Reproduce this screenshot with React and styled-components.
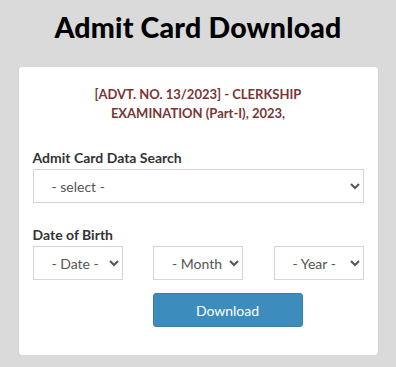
import React from "react";
import styled, { createGlobalStyle } from "styled-components";

const Global = createGlobalStyle`
    body {
        margin: 0;
        background: #dadada;
        font-family: Lato, "Liberation Sans", sans-serif;
    }
`;

const Page = styled.div`
    display: flex;
    flex-direction: column;
    align-items: center;
    padding-top: 5px;
`;

const Heading = styled.h1`
    margin: 0 0 17px;
    font-size: 28.5px;
    font-weight: 900;
    color: #000;
    line-height: 45px;
    letter-spacing: 0.2px;
`;

const Card = styled.div`
    width: 359px;
    box-sizing: border-box;
    background: #fff;
    border-radius: 3px;
    box-shadow: 0 1px 2px rgba(0,0,0,0.12);
    padding: 18px 14px 28px;
    display: flex;
    flex-direction: column;
`;

const Notice = styled.div`
    color: #7b3535;
    font-weight: 700;
    font-size: 13px;
    line-height: 19px;
    text-align: center;
    padding: 0 60px;
    margin-bottom: 26px;
`;

const Label = styled.label`
    font-weight: 700;
    font-size: 14px;
    color: #333;
    line-height: 18px;
    margin-bottom: 2px;
`;

const Select = styled.select`
    width: ${props => props.width || "100%"};
    height: 34px;
    box-sizing: border-box;
    border: 1px solid #d2d2e0;
    border-radius: 0;
    background: #fff;
    color: #555;
    font-family: Lato, "Liberation Sans", sans-serif;
    font-size: 14px;
    padding: 0 4px 0 14px;
    outline: none;
`;

const Field = styled.div`
    display: flex;
    flex-direction: column;
    margin-bottom: ${props => props.gap || "23px"};
`;

const DateRow = styled.div`
    display: flex;
    justify-content: space-between;
`;

// the button sits under the middle date column, not centred in the card
const ButtonRow = styled.div`
    display: flex;
    padding-left: 120px;
`;

const Button = styled.button`
    width: 150px;
    height: 34px;
    background: #3c8dbc;
    color: #fff;
    border: 1px solid #367fa9;
    border-radius: 3px;
    font-family: Lato, "Liberation Sans", sans-serif;
    font-size: 14px;
    cursor: pointer;
`;

export default function App() {
    return (
        <Page>
            <Global />
            <Heading>Admit Card Download</Heading>
            <Card>
                <Notice>[ADVT. NO. 13/2023] - CLERKSHIP EXAMINATION (Part-I), 2023,</Notice>

                <Field>
                    <Label>Admit Card Data Search</Label>
                    <Select defaultValue="">
                        <option value="">- select -</option>
                    </Select>
                </Field>

                <Field gap="13px">
                    <Label>Date of Birth</Label>
                    <DateRow>
                        <Select width="90px"><option>- Date -</option></Select>
                        <Select width="90px"><option>- Month -</option></Select>
                        <Select width="90px"><option>- Year -</option></Select>
                    </DateRow>
                </Field>

                <ButtonRow>
                    <Button>Download</Button>
                </ButtonRow>
            </Card>
        </Page>
    );
}
